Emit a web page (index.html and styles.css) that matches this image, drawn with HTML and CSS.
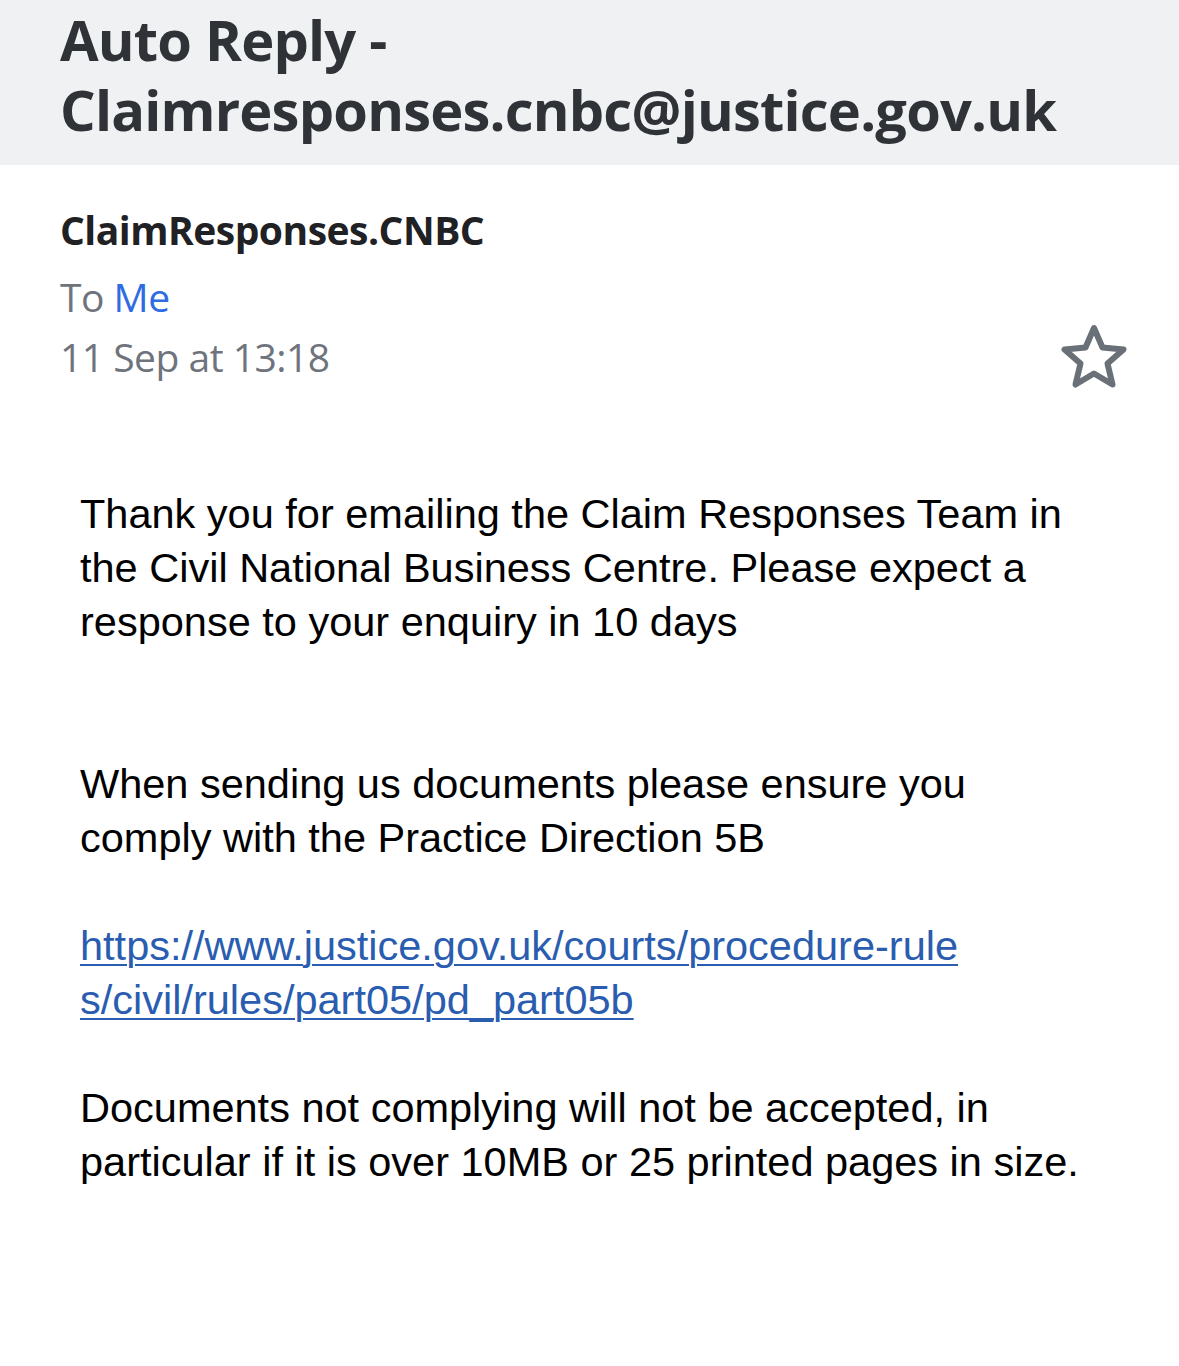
FILE: index.html
```html
<!DOCTYPE html>
<html>
<head>
<meta charset="utf-8">
<link rel="stylesheet" href="styles.css">
</head>
<body>
<header class="subject-bar">
  <h1 class="subject">Auto Reply -<br>Claimresponses.cnbc@justice.gov.uk</h1>
</header>
<section class="meta">
  <div class="meta-text">
    <div class="sender">ClaimResponses.CNBC</div>
    <div class="to">To <span class="me">Me</span></div>
    <div class="date">11 Sep at 13:18</div>
  </div>
  <svg class="star" width="70" height="66" viewBox="0 0 70 66">
    <polygon points="35,4 43.5,23.5 64.5,25.5 48.5,39.5 53.5,60.5 35,49.5 16.5,60.5 21.5,39.5 5.5,25.5 26.5,23.5" fill="none" stroke="#6a7078" stroke-width="6" stroke-linejoin="round"/>
  </svg>
</section>
<main class="body">
  <p>Thank you for emailing the Claim Responses Team in the Civil National Business Centre. Please expect a response to your enquiry in 10 days</p>
  <p class="blank">&nbsp;</p>
  <p>When sending us documents please ensure you comply with the Practice Direction 5B</p>
  <p><a class="link" href="#">https://www.justice.gov.uk/courts/procedure-rule<br>s/civil/rules/part05/pd_part05b</a></p>
  <p>Documents not complying will not be accepted, in particular if it is over 10MB or 25 printed pages in size.</p>
</main>
</body>
</html>
```

FILE: styles.css
```css
html, body {
  margin: 0;
  padding: 0;
  background: #ffffff;
}
body {
  width: 1179px;
  height: 1366px;
  overflow: hidden;
  font-family: "Open Sans", "Noto Sans", sans-serif;
}
.subject-bar {
  background: #f0f1f3;
  height: 165px;
  padding: 4px 0 0 60px;
  box-sizing: border-box;
}
.subject {
  margin: 0;
  font-size: 56px;
  line-height: 70px;
  font-weight: 700;
  color: #2f3236;
  letter-spacing: -0.8px;
}
.meta {
  display: flex;
  justify-content: space-between;
  align-items: flex-end;
  padding: 40px 50px 0 60px;
}
.sender {
  font-size: 39px;
  font-weight: 700;
  color: #1f2124;
  line-height: 50px;
  letter-spacing: -0.5px;
}
.to, .date {
  font-size: 39px;
  line-height: 60px;
  color: #6f747c;
  letter-spacing: -0.5px;
}
.to { margin-top: 12px; }
.me { color: #2f6be4; }
.star {
  display: block;
  margin-bottom: -3px;
}
.body {
  padding: 100px 0 0 80px;
  font-family: "Liberation Sans", Arial, sans-serif;
  font-size: 41.5px;
  line-height: 54px;
  color: #000;
}
.body p {
  margin: 0 0 54px 0;
  width: 1020px;
}
.body p.blank { margin: 0; }
.link {
  color: #2a5db0;
  text-decoration: underline;
  text-decoration-thickness: 2px;
  text-underline-offset: 4px;
}
```
